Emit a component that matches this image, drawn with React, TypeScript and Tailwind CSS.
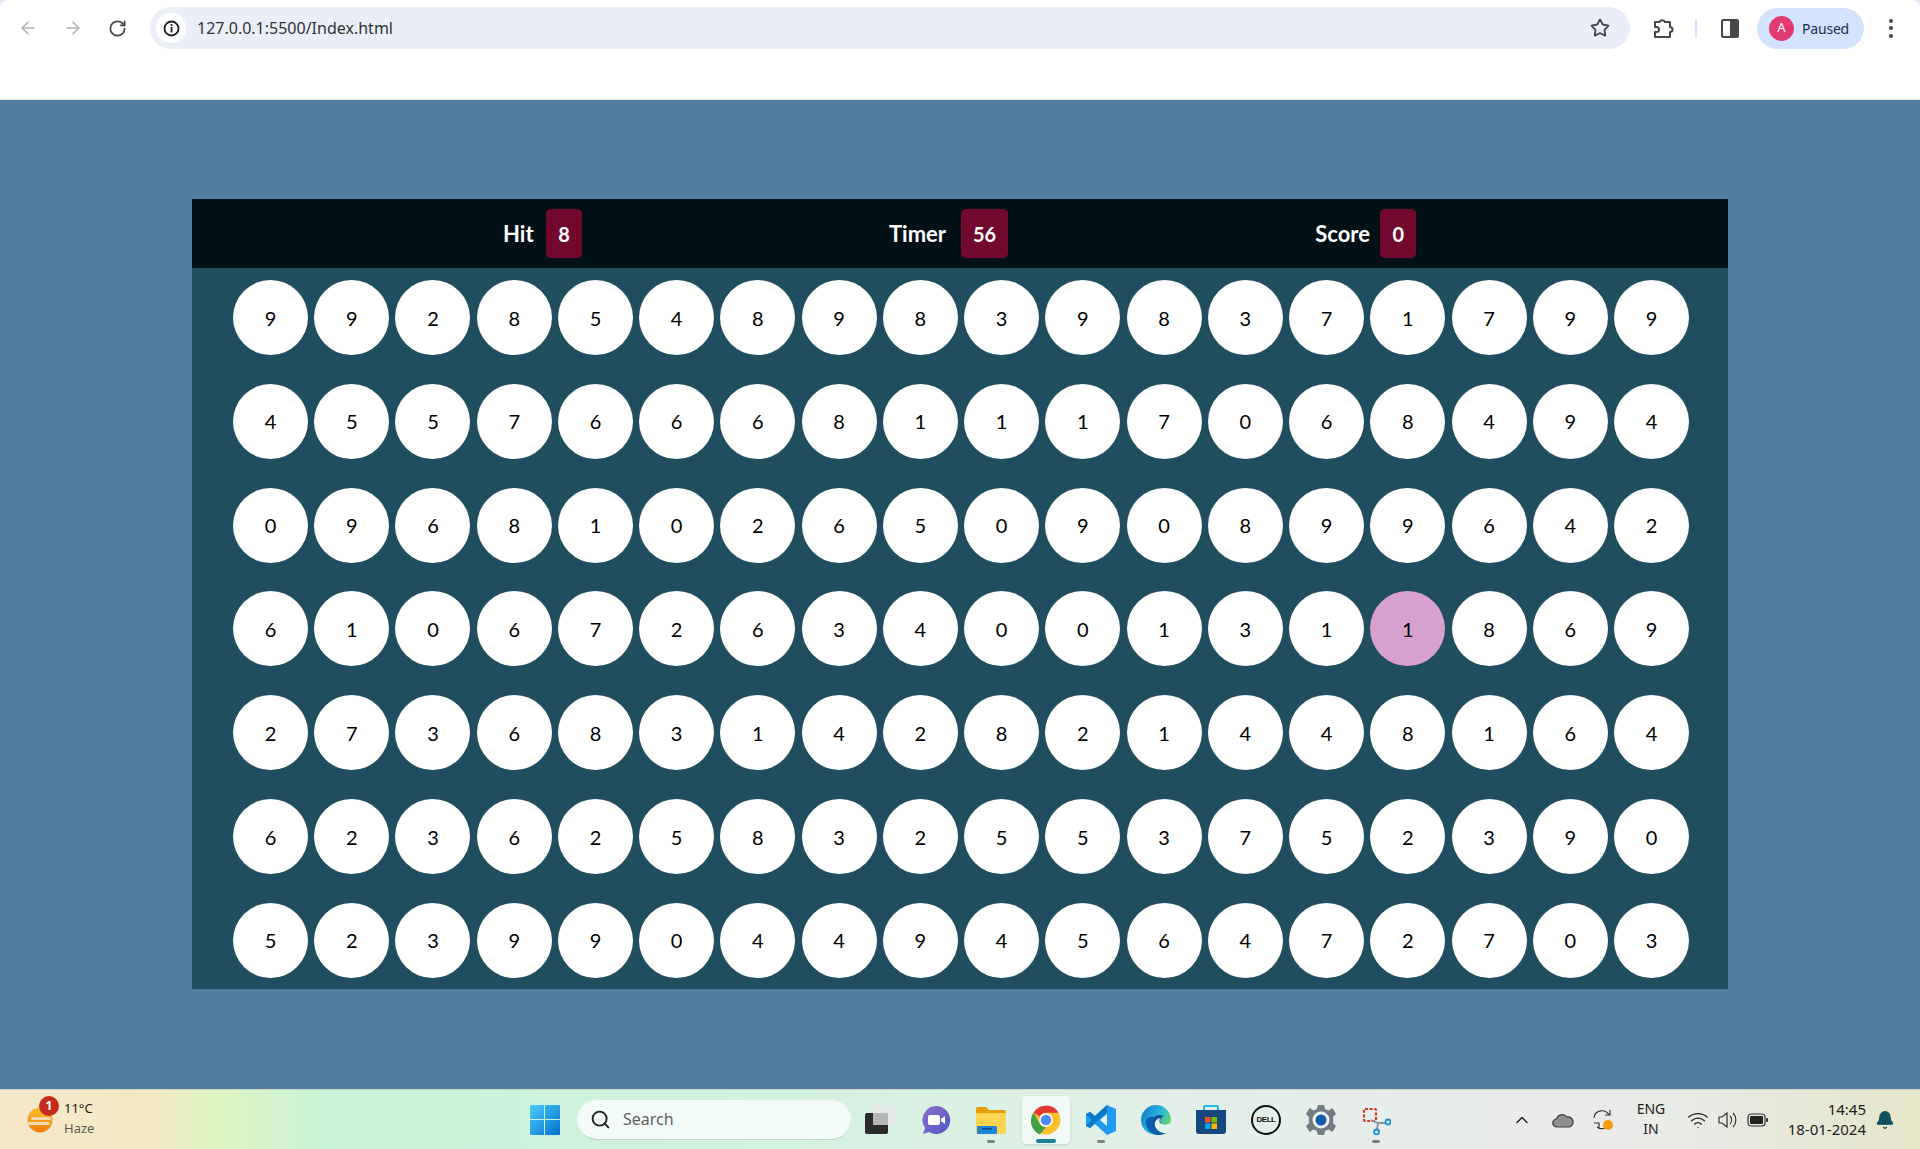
import React from 'react';
import { ArrowLeft, ArrowRight, RotateCw, Star, Search, ChevronUp, Wifi, Bell } from 'lucide-react';

const rows = [
  '992854898398371799',
  '455766681117068494',
  '096810265090899642',
  '610672634001311869',
  '273683142821448164',
  '623625832553752390',
  '523990449456472703',
];

const PINK_ROW = 3;
const PINK_COL = 14;

const Stat = ({ label, value, className, labelWidth }: { label: string; value: string; className: string; labelWidth: string }) => (
  <div className={`flex items-center gap-[12px] ${className}`}>
    <span className={`whitespace-nowrap text-[22px] font-bold text-white ${labelWidth}`}>{label}</span>
    <span className="flex h-[49px] min-w-[36px] items-center justify-center rounded-[5px] bg-[#72082e] px-[12px] text-[20px] font-bold text-white">
      {value}
    </span>
  </div>
);

const TaskSlot = ({ children, dot, active }: { children: React.ReactNode; dot?: boolean; active?: boolean }) => (
  <div
    className={`relative flex h-[48px] w-[48px] shrink-0 items-center justify-center rounded-[4px] ${
      active ? 'bg-[#f1f9f6] shadow-sm' : ''
    }`}
  >
    {children}
    {dot && <span className="absolute bottom-[1px] left-[20px] h-[3px] w-[8px] rounded-full bg-[#808080]" />}
    {active && <span className="absolute bottom-[1px] left-[14px] h-[4px] w-[20px] rounded-full bg-[#1b8398]" />}
  </div>
);

const WindowsLogo = () => (
  <svg width="30" height="30" viewBox="0 0 30 30">
    <defs>
      <linearGradient id="win" x1="0" y1="0" x2="1" y2="1">
        <stop offset="0" stopColor="#4fcbfa" />
        <stop offset="1" stopColor="#0071cf" />
      </linearGradient>
    </defs>
    <path d="M0 1a1 1 0 0 1 1-1h13v14H0zM15 0h14a1 1 0 0 1 1 1v13H15zM0 15h14v15H1a1 1 0 0 1-1-1zM15 15h15v14a1 1 0 0 1-1 1H15z" fill="url(#win)" />
  </svg>
);

const TaskView = () => (
  <svg width="32" height="30" viewBox="0 0 32 30">
    <rect x="0" y="8" width="23" height="21" rx="2" fill="#2b2b2b" />
    <rect x="8" y="0" width="22" height="20" rx="2" fill="#e4e8e6" />
    <rect x="8" y="8" width="15" height="12" fill="#b5b7b6" />
  </svg>
);

const Meet = () => (
  <svg width="30" height="30" viewBox="0 0 30 30">
    <defs>
      <linearGradient id="meet" x1="0" y1="0" x2="1" y2="1">
        <stop offset="0" stopColor="#8c6fc9" />
        <stop offset="1" stopColor="#4f58c8" />
      </linearGradient>
    </defs>
    <path d="M15 1a14 14 0 1 1-7 26l-6 2 2-6A14 14 0 0 1 15 1z" fill="url(#meet)" />
    <rect x="7" y="10" width="12" height="10" rx="2" fill="#fff" />
    <path d="M20 14l4-3v8l-4-3z" fill="#fff" />
  </svg>
);

const Folder = () => (
  <svg width="30" height="28" viewBox="0 0 30 28">
    <path d="M0 3a2 2 0 0 1 2-2h8l3 3h15a2 2 0 0 1 2 2v4H0z" fill="#e3a008" />
    <path d="M0 7h30v19a2 2 0 0 1-2 2H2a2 2 0 0 1-2-2z" fill="#fcd452" />
    <rect x="1" y="20" width="20" height="8" rx="1" fill="#1b87d6" />
    <rect x="6" y="22" width="10" height="1.5" fill="#0d4f8f" />
  </svg>
);

const Chrome = () => (
  <svg width="30" height="30" viewBox="0 0 48 48">
    <circle cx="24" cy="24" r="23" fill="#fbc02d" />
    <path d="M24 1a23 23 0 0 1 20 11.500H24a11.500 11.500 0 0 0-10 5.800L4.100 12.500A23 23 0 0 1 24 1z" fill="#e53935" />
    <path d="M4.100 12.500 14 29.800A11.500 11.500 0 0 0 24 35.500L14 47A23 23 0 0 1 4.100 12.500z" fill="#43a047" />
    <circle cx="24" cy="24" r="11" fill="#fff" />
    <circle cx="24" cy="24" r="8.500" fill="#4c8bf5" />
  </svg>
);

const VsCode = () => (
  <svg width="30" height="30" viewBox="0 0 30 30">
    <path d="M21 0l9 4v22l-9 4-12-11-5 4-4-2V9l4-2 5 4z" fill="#1f9cf0" />
    <path d="M21 0 9 11l-5-4-4 2 6 6-6 6 4 2 17-16z" fill="#0b77c5" />
    <path d="M21 9v12l-7-6z" fill="#e8f2ec" />
  </svg>
);

const Edge = () => (
  <svg width="30" height="30" viewBox="0 0 30 30">
    <defs>
      <linearGradient id="edge" x1="0" y1="0" x2="1" y2="0.600">
        <stop offset="0" stopColor="#0f73c4" />
        <stop offset="0.600" stopColor="#2ab8dd" />
        <stop offset="1" stopColor="#6fd85a" />
      </linearGradient>
    </defs>
    <circle cx="15" cy="15" r="15" fill="url(#edge)" />
    <path d="M30 17c-3 3-10 4-11-1 0-3 2-4 4-5-7-3-13 2-12 8 1 6 8 10 14 9-4 3-12 3-18-3 2 1 0 0 0 0 6 4 18 3 23-8z" fill="#0c4f95" />
    <path d="M30 16c-1 3-5 4-9 3-3-1-3-4-2-6-4 1-6 4-5 8 1 4 6 7 10 7 3-2 6-7 6-12z" fill="#e3f4ea" />
    <path d="M12 19c0 5 5 9 11 9-3 2-8 2-12 0C6 25 4 20 5 15c2-3 5-4 8-3-1 2-1 4-1 7z" fill="#0b5fb0" />
  </svg>
);

const Store = () => (
  <svg width="30" height="30" viewBox="0 0 30 30">
    <path d="M8 5V2a1 1 0 0 1 1-1h12a1 1 0 0 1 1 1v3" fill="none" stroke="#29b6e8" strokeWidth="2" />
    <path d="M0 5h30v21a3 3 0 0 1-3 3H3a3 3 0 0 1-3-3z" fill="#15487f" />
    <rect x="9" y="12" width="5.500" height="5.500" fill="#f25022" />
    <rect x="15.500" y="12" width="5.500" height="5.500" fill="#7fba00" />
    <rect x="9" y="18.500" width="5.500" height="5.500" fill="#00a4ef" />
    <rect x="15.500" y="18.500" width="5.500" height="5.500" fill="#ffb900" />
  </svg>
);

const Dell = () => (
  <div className="flex h-[30px] w-[30px] items-center justify-center rounded-full border-2 border-[#111111] bg-[#e3efe9] font-['Liberation_Sans',sans-serif] text-[8px] font-bold tracking-[-0.5px] text-[#111111]">
    DELL
  </div>
);

const Settings = () => (
  <svg width="30" height="30" viewBox="0 0 30 30">
    <path
      d="M12 0h6l1.200 4 3.300 1.500L26.500 3l3.500 6-3 3 .300 3-.300 3 3 3-3.500 6-4-2.500-3.300 1.500L18 30h-6l-1.200-4-3.300-1.500L3.500 27 0 21l3-3-.300-3 .300-3-3-3 3.500-6 4 2.500L10.800 4z"
      fill="#737b85"
    />
    <circle cx="15" cy="15" r="8.500" fill="#eef0ee" />
    <circle cx="15" cy="15" r="5.500" fill="#0f5cb0" />
  </svg>
);

const Snip = () => (
  <svg width="30" height="30" viewBox="0 0 30 30">
    <rect x="0" y="0" width="22" height="21" rx="3" fill="#e8edee" />
    <rect x="3" y="4" width="12" height="12" rx="1" fill="none" stroke="#cf3a24" strokeWidth="2.200" strokeDasharray="3 1.600" />
    <path d="M10 15l7 3h7M17 18l-1 7" fill="none" stroke="#8a9299" strokeWidth="1.800" />
    <circle cx="27" cy="17" r="2.500" fill="none" stroke="#1c8fd9" strokeWidth="1.800" />
    <circle cx="15.500" cy="27" r="2.500" fill="none" stroke="#1c8fd9" strokeWidth="1.800" />
  </svg>
);

export default function App() {
  return (
    <div className="flex h-[1149px] w-[1920px] flex-col overflow-hidden bg-[#dbe6f8] font-['Noto_Sans',sans-serif]">
      {/* browser toolbar */}
      <div className="flex h-[100px] shrink-0 flex-col rounded-t-[8px] border-b border-[#dfe3e8] bg-white">
        <div className="mt-[7px] flex h-[42px] items-center">
          <ArrowLeft className="ml-[18px] h-[20px] w-[20px] text-[#b0b0b0]" strokeWidth={1.800} />
          <ArrowRight className="ml-[25px] h-[20px] w-[20px] text-[#b0b0b0]" strokeWidth={1.800} />
          <RotateCw className="ml-[25px] h-[19px] w-[19px] text-[#474747]" strokeWidth={2.200} />
          <div className="ml-[23px] flex h-[42px] w-[1480px] items-center rounded-full bg-[#eaeef6]">
            <div className="ml-[6px] flex h-[30px] w-[30px] items-center justify-center rounded-full bg-white">
              <svg width="17" height="17" viewBox="0 0 17 17">
                <circle cx="8.500" cy="8.500" r="7" fill="none" stroke="#1f1f1f" strokeWidth="1.800" />
                <rect x="7.600" y="7" width="1.800" height="5.500" fill="#1f1f1f" />
                <rect x="7.600" y="4" width="1.800" height="1.800" fill="#1f1f1f" />
              </svg>
            </div>
            <span className="ml-[11px] text-[16px] text-[#333333]">127.0.0.1:5500/Index.html</span>
            <Star className="ml-auto mr-[20px] h-[20px] w-[20px] text-[#474747]" strokeWidth={2.200} />
          </div>
          <svg className="ml-[22px]" width="22" height="22" viewBox="0 0 22 22">
            <path
              d="M3 5h4.500a3 3 0 0 1 5.500 0H18v5a2.500 2.500 0 0 1 0 5v5H3v-5h1.500a2 2 0 0 0 0-5H3z"
              fill="none"
              stroke="#474747"
              strokeWidth="2"
              strokeLinejoin="round"
            />
          </svg>
          <div className="ml-[21px] h-[19px] w-[2px] bg-[#d3e3fd]" />
          <div className="ml-[24px] flex h-[19px] w-[18px] rounded-[2px] border-2 border-[#474747]">
            <div className="ml-auto h-full w-[7px] bg-[#474747]" />
          </div>
          <div className="ml-[18px] flex h-[41px] w-[107px] items-center rounded-full bg-[#d3e3fd]">
            <div className="ml-[12px] flex h-[25px] w-[25px] items-center justify-center rounded-full bg-[#e23b74] text-[13px] text-white">
              A
            </div>
            <span className="ml-[8px] text-[14px] tracking-[-0.2px] text-[#1f2f55]">Paused</span>
          </div>
          <div className="ml-[25px] flex flex-col gap-[3.500px]">
            <span className="h-[4px] w-[4px] rounded-full bg-[#474747]" />
            <span className="h-[4px] w-[4px] rounded-full bg-[#474747]" />
            <span className="h-[4px] w-[4px] rounded-full bg-[#474747]" />
          </div>
        </div>
      </div>

      {/* game page */}
      <div className="flex flex-1 items-center justify-center bg-[#527d9f] pb-[1px]">
        <div className="flex h-[790px] w-[1536px] flex-col bg-[#214e5f] font-['Lato',sans-serif]">
          <div className="flex h-[69px] shrink-0 items-center bg-[#031016]">
            <Stat label="Hit" value="8" labelWidth="w-[31px]" className="ml-[311px]" />
            <Stat label="Timer" value="56" labelWidth="w-[60px]" className="ml-[307px]" />
            <Stat label="Score" value="0" labelWidth="w-[53px]" className="ml-[307px]" />
          </div>
          <div className="flex flex-1 flex-col justify-between pb-[11px] pl-[41px] pr-[39px] pt-[12px]">
            {rows.map((row, r) => (
              <div key={r} className="flex justify-between">
                {row.split('').map((digit, c) => (
                  <div
                    key={c}
                    className={`flex h-[75px] w-[75px] items-center justify-center rounded-full text-[20px] text-black ${
                      r === PINK_ROW && c === PINK_COL ? 'bg-[#d7a1cd]' : 'bg-white'
                    }`}
                  >
                    {digit}
                  </div>
                ))}
              </div>
            ))}
          </div>
        </div>
      </div>

      {/* windows taskbar */}
      <div className="flex h-[60px] shrink-0 items-center border-t border-[#c9d6cc] bg-[linear-gradient(90deg,#f6e8ca_0%,#f3e9c6_8%,#e0f6c2_11%,#c9f3d6_17%,#d6f2e2_45%,#e4efe9_62%,#e9ecea_78%,#e8ebe6_88%,#e6e6c9_100%)] text-[#222222]">
        <div className="relative ml-[25px] flex w-[505px] shrink-0 items-center">
          <svg width="28" height="26" viewBox="0 0 28 26">
            <defs>
              <linearGradient id="sun" x1="0" y1="0" x2="0" y2="1">
                <stop offset="0" stopColor="#fbc02d" />
                <stop offset="1" stopColor="#ef7b0a" />
              </linearGradient>
            </defs>
            <circle cx="15" cy="13" r="12.500" fill="url(#sun)" />
            <rect x="6" y="10" width="20" height="3" rx="1.500" fill="#f0dcae" />
            <rect x="0" y="15" width="25" height="3" rx="1.500" fill="#f0dcae" />
          </svg>
          <span className="absolute left-[14px] top-[-5px] flex h-[20px] w-[20px] items-center justify-center rounded-full bg-[#c42b1c] text-[12px] font-bold text-white">
            1
          </span>
          <div className="-mt-[3px] ml-[11px] flex flex-col text-[13px] leading-[20px]">
            <span>11°C</span>
            <span className="text-[#5d5d5d]">Haze</span>
          </div>
        </div>
        <WindowsLogo />
        <div className="ml-[17px] flex h-[40px] w-[274px] shrink-0 items-center rounded-full border-b border-[#bcd3c6] bg-[#f2fbf7]">
          <Search className="ml-[13px] h-[21px] w-[21px] text-[#222222]" strokeWidth={2.200} />
          <span className="ml-[12px] text-[16px] text-[#5f5f5f]">Search</span>
        </div>
        <div className="ml-[6px] flex items-center gap-[7px]">
          <TaskSlot><TaskView /></TaskSlot>
          <TaskSlot><Meet /></TaskSlot>
          <TaskSlot dot><Folder /></TaskSlot>
          <TaskSlot active><Chrome /></TaskSlot>
          <TaskSlot dot><VsCode /></TaskSlot>
          <TaskSlot><Edge /></TaskSlot>
          <TaskSlot><Store /></TaskSlot>
          <TaskSlot><Dell /></TaskSlot>
          <TaskSlot><Settings /></TaskSlot>
          <TaskSlot dot><Snip /></TaskSlot>
        </div>
        <div className="ml-[112px] flex items-center">
          <ChevronUp className="h-[20px] w-[20px] text-[#222222]" strokeWidth={1.800} />
          <svg className="ml-[20px]" width="22" height="16" viewBox="0 0 22 16">
            <path d="M5 15a4 4 0 0 1-.500-8A6 6 0 0 1 15 5a5 5 0 0 1 2 10z" fill="#8f8f8f" stroke="#3a3a3a" strokeWidth="1.200" />
          </svg>
          <svg className="ml-[18px]" width="22" height="22" viewBox="0 0 22 22">
            <path d="M2 9a8 8 0 0 1 15-3M18 1v5h-5M13 19a8 8 0 0 1-8-1M2 14h5v5" fill="none" stroke="#333333" strokeWidth="1.200" />
            <circle cx="16" cy="16" r="5" fill="#f59a0c" />
          </svg>
          <div className="-mt-[2px] ml-[19px] flex w-[36px] flex-col items-center text-[14px] leading-[20px]">
            <span>ENG</span>
            <span>IN</span>
          </div>
          <Wifi className="ml-[18px] h-[22px] w-[22px] text-[#222222]" strokeWidth={1.500} />
          <svg className="ml-[8px]" width="22" height="20" viewBox="0 0 22 20">
            <path d="M2 7h3l5-4v14l-5-4H2z" fill="none" stroke="#333333" strokeWidth="1.200" />
            <path d="M13 6a6 6 0 0 1 0 8M16 3a10 10 0 0 1 0 14" fill="none" stroke="#333333" strokeWidth="1.200" />
          </svg>
          <svg className="ml-[8px]" width="22" height="14" viewBox="0 0 22 14">
            <rect x="1" y="1" width="17" height="12" rx="3" fill="none" stroke="#333333" strokeWidth="1.200" />
            <rect x="3" y="3" width="13" height="8" rx="1" fill="#222222" />
            <rect x="19" y="5" width="2" height="4" rx="1" fill="#333333" />
          </svg>
          <div className="-mt-[2px] ml-[13px] flex w-[84px] flex-col items-end text-[15px] leading-[20px]">
            <span>14:45</span>
            <span>18-01-2024</span>
          </div>
          <Bell className="ml-[9px] h-[20px] w-[20px] fill-[#11505f] text-[#11505f]" strokeWidth={1.500} />
        </div>
      </div>
    </div>
  );
}
